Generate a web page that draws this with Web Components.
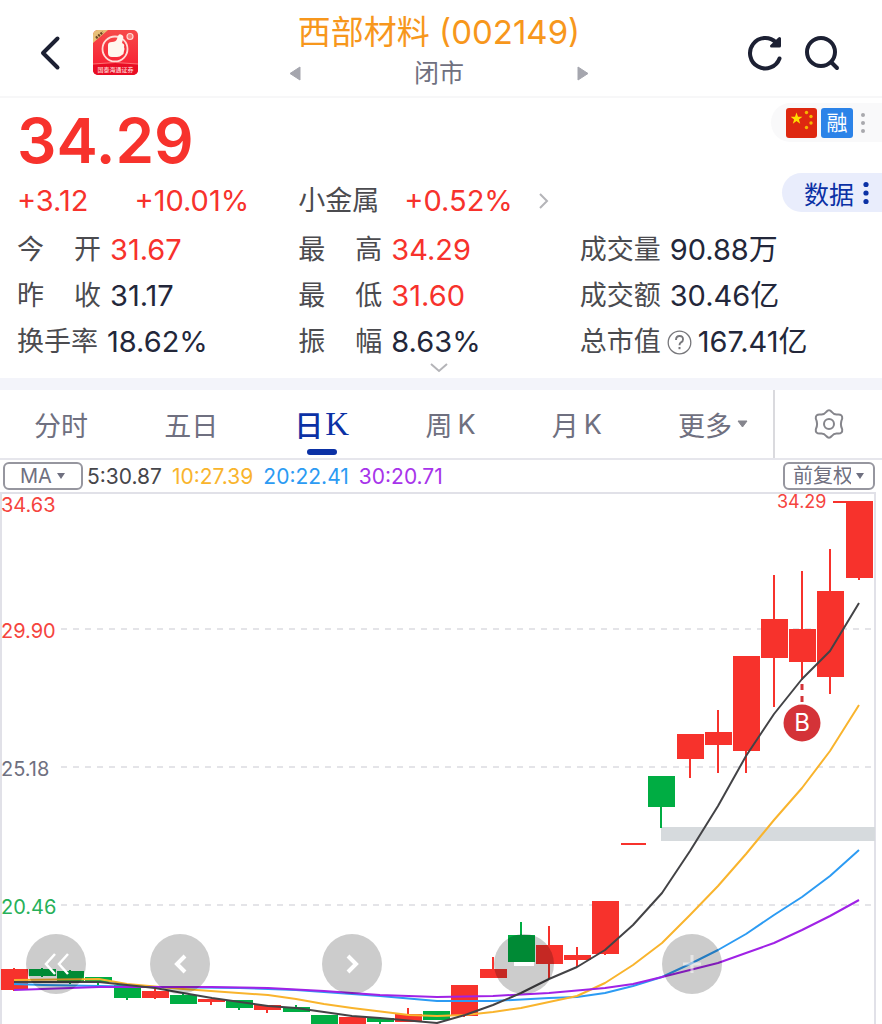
<!DOCTYPE html>
<html lang="zh-CN">
<head>
<meta charset="UTF-8">
<meta name="viewport" content="width=device-width, initial-scale=1">
<title>西部材料 (002149)</title>
<style>
    html {
        background: #fff;
        overflow-x: hidden;
    }

    body {
        margin: 0;
        font-family: Inter, 'Noto Sans CJK SC', sans-serif;
        color: #23273a;
        --up: #f7322c;
        --down: #00ad43;
        --muted: #6f7080;
        --brand: #0b31a5;
        --line: #e6e6ec;
    }
</style>
</head>
<body>
<stock-page></stock-page>

<script>
/**
 * Title bar: back, broker logo, stock name and tools
 */
class StockHeader extends HTMLElement {
    constructor() {
        super();
        this.attachShadow({ mode: 'open' });
    }

    connectedCallback() {
        this.shadowRoot.innerHTML = `
            <style>
                :host {
                    display: grid;
                    grid-template-columns: 1fr auto 1fr;
                    align-items: center;
                    height: 98px;
                    padding: 0 42px 0 38px;
                    border-bottom: 2px solid #f7f7f8;
                    box-sizing: border-box;
                }

                button {
                    display: block;
                    border: 0;
                    padding: 0;
                    background: none;
                    color: inherit;
                }

                svg { display: block; }

                .left, .right {
                    display: flex;
                    align-items: center;
                    padding-top: 9px;
                }

                .left { gap: 31px; }

                .right {
                    justify-content: flex-end;
                    gap: 20px;
                    color: #1c2033;
                }

                h1 {
                    margin: 0;
                    font-size: 33px;
                    line-height: 42px;
                    font-weight: 400;
                    color: #f7971c;
                    white-space: nowrap;
                }

                .status {
                    display: flex;
                    align-items: center;
                    justify-content: space-between;
                    width: 300px;
                    margin: 0 auto;
                    font-size: 25px;
                    line-height: 40px;
                    color: var(--muted);
                }

                .middle {
                    padding-top: 8px;
                    text-align: center;
                }
            </style>
            <div class="left">
                <button aria-label="返回">
                    <svg width="24" height="36" viewBox="0 0 24 36" fill="none" stroke="#1c2033" stroke-width="4" stroke-linecap="round" stroke-linejoin="round"><path d="M19.500 3.500 5 18l14.500 14.500"/></svg>
                </button>
                <svg width="45" height="45" viewBox="0 0 45 45" role="img" aria-label="国泰海通证券">
                    <defs>
                        <linearGradient id="bg" x1="0" y1="0" x2="0" y2="1"><stop offset="0" stop-color="#f64a49"/><stop offset="1" stop-color="#f8172f"/></linearGradient>
                        <clipPath id="box"><rect width="45" height="45" rx="5"/></clipPath>
                    </defs>
                    <g clip-path="url(#box)">
                        <rect width="45" height="45" fill="url(#bg)"/>
                        <path d="M0 0h15L0 13z" fill="#e8c078"/>
                        <path d="M3 8l7-6" stroke="#6d4524" stroke-width="2.500" stroke-dasharray="2 1"/>
                        <circle cx="22" cy="19" r="12.500" fill="none" stroke="#ffdcd6" stroke-width="1.800"/>
                        <path d="M15 15q0-3 4-3 4 0 5-3l1-3q1-3 4-1 2 1 1 4l-1 4q3 1 2 4 1 2 0 4 0 3-2 4-2 2-5 2h-5q-4 0-4-4z" fill="#fff6ee"/>
                        <circle cx="37" cy="6.500" r="3" fill="#fb8079" stroke="#ffd8d2" stroke-width="1.200"/>
                        <path d="M0 34q22-3 45 0v11H0z" fill="#e80d24"/>
                        <path d="M0 34q22-3 45 0" fill="none" stroke="#ff7475"/>
                        <text x="22.500" y="42" text-anchor="middle" font-size="6" font-weight="500" fill="#ffd4d2">国泰海通证券</text>
                    </g>
                </svg>
            </div>
            <div class="middle">
                <h1>西部材料 (002149)</h1>
                <div class="status">
                    <button aria-label="上一只"><svg width="12" height="15" viewBox="0 0 12 15"><path d="M1 7.500 11 1v13z" fill="#a5a6ae" stroke="#a5a6ae" stroke-linejoin="round"/></svg></button>
                    <span>闭市</span>
                    <button aria-label="下一只"><svg width="12" height="15" viewBox="0 0 12 15"><path d="M11 7.500 1 1v13z" fill="#a5a6ae" stroke="#a5a6ae" stroke-linejoin="round"/></svg></button>
                </div>
            </div>
            <div class="right">
                <button aria-label="刷新">
                    <svg width="38" height="38" viewBox="0 0 38 38" fill="none" stroke="currentColor" stroke-width="4" stroke-linecap="round" stroke-linejoin="round"><path d="M33.500 24.500A15.200 15.200 0 1 1 30 8.500"/><path d="M33.500 4.500v7.500h-8z" fill="currentColor" stroke-width="3"/></svg>
                </button>
                <button aria-label="搜索">
                    <svg width="36" height="38" viewBox="0 0 36 38" fill="none" stroke="currentColor" stroke-width="4" stroke-linecap="round"><circle cx="17" cy="18" r="14"/><path d="m27.500 28.500 5.500 5.500"/></svg>
                </button>
            </div>
        `;
    }
}

/**
 * One label/value pair of the quote grid
 */
class QuoteMetric extends HTMLElement {
    constructor() {
        super();
        this.attachShadow({ mode: 'open' });
    }

    connectedCallback() {
        this.shadowRoot.innerHTML = `
            <style>
                :host {
                    display: flex;
                    align-items: center;
                    font-size: 27px;
                    line-height: 46px;
                    white-space: nowrap;
                }

                .label {
                    width: 84px;
                    margin-right: 9px;
                    color: #4b4b4f;
                    text-align-last: justify;
                }

                :host([wide]) .label {
                    width: auto;
                    text-align-last: auto;
                }

                :host([help]) .label { margin-right: 6px; }

                .value { font-size: 29px; }

                :host([up]) .value { color: var(--up); }

                ::slotted(svg) {
                    display: block;
                    margin-right: 6px;
                }
            </style>
            <span class="label">${this.getAttribute('label')}</span>
            <slot name="help"></slot>
            <span class="value"><slot></slot></span>
        `;
    }
}

/**
 * Price, change, sector and the metric grid
 */
class QuoteSummary extends HTMLElement {
    constructor() {
        super();
        this.attachShadow({ mode: 'open' });
    }

    connectedCallback() {
        this.shadowRoot.innerHTML = `
            <style>
                :host {
                    display: block;
                    padding: 5px 21px 0 17px;
                    border-bottom: 12px solid #f3f4fa;
                }

                .top, .metrics {
                    display: grid;
                    grid-template-columns: 1fr 1fr 1fr;
                }

                .metrics { padding-top: 4px; }

                .main { grid-column: span 2; }

                .price {
                    font-size: 62px;
                    line-height: 76px;
                    font-weight: 600;
                    color: var(--up);
                }

                .change {
                    display: grid;
                    grid-template-columns: 1fr 1fr;
                    font-size: 29px;
                    line-height: 44px;
                    color: var(--up);
                    white-space: nowrap;
                }

                .change > * {
                    display: flex;
                    align-items: center;
                }

                .own { gap: 46px; }

                .sector {
                    gap: 25px;
                    color: inherit;
                    text-decoration: none;
                }

                .sector .name {
                    font-size: 27px;
                    color: #4b4b4f;
                }

                .side {
                    display: flex;
                    flex-direction: column;
                    align-items: flex-end;
                    gap: 31px;
                    margin-right: -21px;
                }

                .side button {
                    display: flex;
                    align-items: center;
                    height: 39px;
                    border: 0;
                    border-radius: 20px 0 0 20px;
                    font-family: inherit;
                }

                .badges {
                    gap: 4px;
                    padding: 0 13px 0 15px;
                    background: #f9f9fa;
                }

                .rong {
                    width: 32px;
                    border-radius: 3px;
                    background: #2c83e8;
                    color: #fff;
                    font-size: 21px;
                    line-height: 30px;
                    text-align: center;
                }

                .data {
                    gap: 9px;
                    padding: 0 13px 0 22px;
                    background: #e9edfc;
                    color: var(--brand);
                    font-size: 25px;
                }

                svg { display: block; }

                .expand {
                    display: block;
                    margin: -2px auto 0;
                    padding: 0 0 5px;
                    border: 0;
                    background: none;
                }
            </style>
            <div class="top">
                <div class="main">
                    <div class="price">34.29</div>
                    <div class="change">
                        <div class="own"><span>+3.12</span><span>+10.01%</span></div>
                        <a class="sector" href="#sector"><span class="name">小金属</span><span>+0.52%</span><svg width="11" height="16" viewBox="0 0 11 16" fill="none" stroke="#b4b4b8" stroke-width="2"><path d="m2 1 7 7-7 7"/></svg></a>
                    </div>
                </div>
                <div class="side">
                    <button class="badges" aria-label="标签">
                        <svg width="31" height="30" viewBox="0 0 31 30">
                            <rect width="31" height="30" rx="3" fill="#de2810"/>
                            <path d="m10.500 4.500 1.500 4.200h4.400l-3.500 2.700 1.300 4.300-3.700-2.600-3.700 2.600 1.300-4.300-3.500-2.700H9z" fill="#ffde00"/>
                            <g fill="#f5b800"><circle cx="20.500" cy="4.500" r="1.700"/><circle cx="25" cy="8.500" r="1.700"/><circle cx="25" cy="15" r="1.700"/><circle cx="20.500" cy="19.500" r="1.700"/></g>
                        </svg>
                        <span class="rong">融</span>
                        <svg width="12" height="24" viewBox="0 0 12 24" fill="#a9a9ad"><circle cx="6" cy="4" r="2"/><circle cx="6" cy="12" r="2"/><circle cx="6" cy="20" r="2"/></svg>
                    </button>
                    <button class="data"><span>数据</span><svg width="6" height="24" viewBox="0 0 6 24" fill="#0b31a5"><circle cx="3" cy="3.500" r="2.600"/><circle cx="3" cy="12" r="2.600"/><circle cx="3" cy="20.500" r="2.600"/></svg></button>
                </div>
            </div>
            <div class="metrics">
                <quote-metric label="今 开" up>31.67</quote-metric>
                <quote-metric label="最 高" up>34.29</quote-metric>
                <quote-metric label="成交量" wide>90.88万</quote-metric>
                <quote-metric label="昨 收">31.17</quote-metric>
                <quote-metric label="最 低" up>31.60</quote-metric>
                <quote-metric label="成交额" wide>30.46亿</quote-metric>
                <quote-metric label="换手率" wide>18.62%</quote-metric>
                <quote-metric label="振 幅">8.63%</quote-metric>
                <quote-metric label="总市值" wide help>
                    <svg slot="help" width="25" height="25" viewBox="0 0 25 25" fill="none" stroke="#77777b"><circle cx="12.500" cy="12.500" r="11.300" stroke-width="1.300"/><path d="M9 10q0-4 3.600-4T16 9.500q0 1.800-2 2.900-1.500.8-1.500 2.800" stroke-width="1.900"/><path d="M12.500 17v2.200" stroke-width="2"/></svg>167.41亿</quote-metric>
            </div>
            <button class="expand" aria-label="展开"><svg width="18" height="10" viewBox="0 0 18 10" fill="none" stroke="#b4b4b8" stroke-width="2"><path d="m1 1 8 7 8-7"/></svg></button>
        `;
    }
}

/**
 * K-line period tabs with the settings button
 */
class PeriodTabs extends HTMLElement {
    constructor() {
        super();
        this.attachShadow({ mode: 'open' });
    }

    connectedCallback() {
        this.shadowRoot.innerHTML = `
            <style>
                :host {
                    display: flex;
                    height: 68px;
                    border-bottom: 2px solid var(--line);
                }

                nav {
                    flex: 1;
                    display: flex;
                    justify-content: space-between;
                    padding: 0 25px 0 34px;
                    border-right: 2px solid #dadade;
                }

                button {
                    position: relative;
                    display: flex;
                    align-items: center;
                    gap: 5px;
                    padding: 0;
                    border: 0;
                    background: none;
                    font: inherit;
                    font-size: 27px;
                    color: var(--muted);
                    white-space: nowrap;
                }

                .active {
                    gap: 2px;
                    color: var(--brand);
                    font-size: 29px;
                    font-weight: 500;
                }

                .active .k {
                    font-family: 'Liberation Serif', serif;
                    font-size: 33px;
                }

                .active::after {
                    content: '';
                    position: absolute;
                    left: 50%;
                    bottom: 3px;
                    width: 30px;
                    height: 6px;
                    margin-left: -15px;
                    border-radius: 3px;
                    background: var(--brand);
                }

                .settings {
                    width: 107px;
                    justify-content: center;
                }
            </style>
            <nav aria-label="周期">
                <button>分时</button>
                <button>五日</button>
                <button class="active"><span>日</span><span class="k">K</span></button>
                <button><span>周</span><span>K</span></button>
                <button><span>月</span><span>K</span></button>
                <button><span>更多</span><svg width="11" height="8" viewBox="0 0 11 8"><path d="M1 1h9L5.500 7z" fill="#85858d" stroke="#85858d" stroke-linejoin="round"/></svg></button>
            </nav>
            <button class="settings" aria-label="设置">
                <svg width="32" height="32" viewBox="0 0 32 32" fill="none" stroke="#85858b" stroke-width="2" stroke-linejoin="round"><path d="M13.200 4q2.800-3.400 5.600 0 2.400 3.200 6.200 2.400 4.700-.2 4.200 4.200-2.600 5.400 0 10.800.5 4.400-4.200 4.200-3.800-.8-6.200 2.400-2.800 3.400-5.600 0-2.400-3.200-6.200-2.400-4.700.2-4.200-4.200 2.600-5.400 0-10.800Q2.300 6.200 7 6.400 10.800 7.200 13.200 4z"/><circle cx="16" cy="16" r="5"/></svg>
            </button>
        `;
    }
}

/**
 * Small bordered drop-down
 */
class DropPicker extends HTMLElement {
    constructor() {
        super();
        this.attachShadow({ mode: 'open' });
    }

    connectedCallback() {
        const options = this.getAttribute('options').split(',');

        this.shadowRoot.innerHTML = `
            <style>
                :host {
                    display: block;
                    position: relative;
                }

                select {
                    display: block;
                    appearance: none;
                    width: 100%;
                    height: 28px;
                    padding: 0 22px 0 8px;
                    border: 2px solid #96969f;
                    border-radius: 6px;
                    background: #fff;
                    color: var(--muted);
                    font: inherit;
                    font-size: 20px;
                    line-height: 24px;
                }

                :host([latin]) select { padding-left: 15px; }

                svg {
                    position: absolute;
                    right: 11px;
                    top: 11px;
                    pointer-events: none;
                }

                :host([latin]) svg { right: 18px; }
            </style>
            <select aria-label="${this.getAttribute('label')}">
                ${options.map(o => `<option>${o}</option>`).join('')}
            </select>
            <svg width="8" height="6" viewBox="0 0 8 6"><path d="M0 0h8L4 6z" fill="#6f7080"/></svg>
        `;
    }
}

/**
 * Moving average readout above the chart
 */
class AverageBar extends HTMLElement {
    constructor() {
        super();
        this.attachShadow({ mode: 'open' });
    }

    connectedCallback() {
        this.shadowRoot.innerHTML = `
            <style>
                :host {
                    display: flex;
                    align-items: center;
                    gap: 10px;
                    height: 32px;
                    padding: 0 7px 0 3px;
                    font-size: 21px;
                }

                .ma {
                    width: 80px;
                    margin-right: -6px;
                }

                .adjust {
                    width: 92px;
                    margin-left: auto;
                }
            </style>
            <drop-picker class="ma" label="指标" options="MA,BOLL" latin></drop-picker>
            <span style="color: #46464a">5:30.87</span>
            <span style="color: #f9b42d">10:27.39</span>
            <span style="color: #2c9bf3">20:22.41</span>
            <span style="color: #a734ea">30:20.71</span>
            <drop-picker class="adjust" label="复权" options="前复权,后复权,不复权"></drop-picker>
        `;
    }
}

/**
 * Candlestick chart with averages and the pan/zoom buttons
 */
class KlineChart extends HTMLElement {
    constructor() {
        super();
        this.attachShadow({ mode: 'open' });
        this.step = 28.15;
        // [top, bottom, wick top, wick bottom, colour], oldest first
        this.candles = [
            [477, 498, 476, 499, 'u'], [477, 484, 476, 485, 'd'], [479, 491, 478, 492, 'd'],
            [485, 490, 485, 493, 'd'], [493, 506, 493, 508, 'd'], [499, 506, 497, 507, 'u'],
            [503, 512, 502, 512, 'd'], [507, 510, 507, 513, 'u'], [508, 516, 508, 518, 'd'],
            [513, 518, 513, 521, 'u'], [515, 520, 513, 520, 'd'], [523, 536, 523, 540, 'd'],
            [525, 536, 525, 540, 'u'], [526, 530, 525, 532, 'd'], [522, 530, 516, 530, 'u'],
            [519, 528, 519, 528, 'd'], [493, 524, 493, 525, 'u'], [477, 486, 465, 486, 'u'],
            [443, 470, 430, 474, 'd'], [453, 472, 434, 487, 'u'], [463, 468, 455, 475, 'u'],
            [409, 462, 409, 463, 'u'], [351, 353, 351, 353, 'u'], [284, 315, 284, 336, 'd'],
            [242, 267, 242, 286, 'u'], [240, 253, 218, 281, 'u'], [164, 259, 164, 281, 'u'],
            [127, 166, 83, 215, 'u'], [137, 170, 79, 188, 'u'], [99, 185, 57, 202, 'u'],
            [9, 86, 9, 88, 'u']
        ];
        this.averages = {
            '#2c9bf3': '14,492 43,493 99,494 155,495 240,496 296,498 324,500 380,504 437,509 493,509 549,506 577,505 605,501 633,494 662,485 690,472 718,458 746,442 774,423 802,405 830,384 859,358',
            '#f9b42d': '14,488 99,487 127,492 183,497 268,503 296,507 324,512 352,516 409,523 437,524 465,523 493,520 521,516 549,510 577,504 605,491 633,473 662,451 690,423 718,394 746,362 774,328 802,296 830,259 859,213',
            '#a022e6': '14,498 99,495 211,495 268,496 324,499 380,503 437,505 493,504 549,501 605,496 633,492 662,485 718,471 746,461 774,451 802,438 830,424 859,408',
            '#434346': '14,490 99,490 127,493 155,496 183,501 212,506 240,510 268,514 296,516 324,520 352,524 380,526 437,531 465,523 493,513 521,501 549,487 577,475 605,458 633,433 662,401 690,359 718,314 746,264 774,222 802,187 830,159 859,111'
        };
    }

    connectedCallback() {
        this.render();
    }

    drawCandle([top, bottom, high, low, kind], i) {
        const x = Math.round(14 + i * this.step);
        const color = kind === 'u' ? '#f7322c' : '#00ad43';
        const half = bottom - top < 3 ? 12 : 13;
        return `
            <rect x="${x - 1}" y="${high}" width="2" height="${low - high}" fill="${color}"/>
            <rect x="${x - half}" y="${top}" width="${half * 2 + 1}" height="${bottom - top}" fill="${color}"/>`;
    }

    render() {
        const levels = [[137, '29.90', '#f5443e'], [275, '25.18', '#6f7080'], [413, '20.46', '#27b059']];
        const lines = Object.entries(this.averages);

        this.shadowRoot.innerHTML = `
            <style>
                :host {
                    display: block;
                    position: relative;
                }

                .plot {
                    display: block;
                    width: 100%;
                    height: auto;
                }

                text { font-size: 20px; }

                /* controls float over the plot */
                button {
                    position: absolute;
                    top: 83%;
                    width: 60px;
                    height: 60px;
                    padding: 0;
                    border: 0;
                    border-radius: 50%;
                    background: rgba(0, 0, 0, 0.2);
                }

                button svg {
                    display: block;
                    margin: 0 auto;
                }
            </style>
            <svg class="plot" viewBox="0 0 882 532" role="img" aria-label="日K线">
                <path d="M1 532V1h874v531" fill="none" stroke="#e1e1e8" stroke-width="2"/>
                <g stroke="#dcdce1" stroke-width="1.400" stroke-dasharray="6 6">
                    ${levels.map(([y]) => `<path d="M61 ${y}H875"/>`).join('')}
                </g>
                <rect x="661" y="335" width="214" height="14" fill="#d6dadd"/>
                ${this.candles.map((c, i) => this.drawCandle(c, i)).join('')}
                ${lines.map(([color, points]) => `<polyline points="${points}" fill="none" stroke="${color}" stroke-width="2" stroke-linejoin="round"/>`).join('')}
                <text x="1" y="20" fill="#f5443e">34.63</text>
                ${levels.map(([y, label, color]) => `<text x="1" y="${y + 9}" fill="${color}">${label}</text>`).join('')}
                <text x="777" y="16" fill="#f5443e" style="font-size: 18px">34.29</text>
                <path d="M833 10h13" stroke="#f7322c" stroke-width="2"/>
                <path d="M802 192v18" stroke="#d43338" stroke-width="3" stroke-dasharray="6 6"/>
                <circle cx="802" cy="231" r="18.500" fill="#d43338"/>
                <text x="802" y="239" text-anchor="middle" fill="#fff" style="font-size: 24px">B</text>
            </svg>
            <button style="left: 3%" aria-label="最早"><svg width="28" height="24" viewBox="0 0 28 24" fill="none" stroke="#fff" stroke-width="2.500"><path d="m13 2-9 10 9 10M26 2l-9 10 9 10"/></svg></button>
            <button style="left: 17%" aria-label="向左"><svg width="24" height="24" viewBox="0 0 24 24" fill="none" stroke="#fff" stroke-width="4"><path d="m17 4-8 8 8 8"/></svg></button>
            <button style="left: 36.5%" aria-label="向右"><svg width="24" height="24" viewBox="0 0 24 24" fill="none" stroke="#fff" stroke-width="4"><path d="m8 4 8 8-8 8"/></svg></button>
            <button style="left: 56%" aria-label="缩小"><svg width="22" height="24" viewBox="0 0 22 24" fill="none" stroke="#fff" stroke-width="4"><path d="M1 12h20"/></svg></button>
            <button style="left: 75%" aria-label="放大"><svg width="22" height="24" viewBox="0 0 22 24" fill="none" stroke="#fff" stroke-opacity=".5" stroke-width="3"><path d="M2 12h18M11 3v18"/></svg></button>
        `;
    }
}

class StockPage extends HTMLElement {
    constructor() {
        super();
        this.attachShadow({ mode: 'open' });
    }

    connectedCallback() {
        this.shadowRoot.innerHTML = `
            <style>
                :host {
                    display: block;
                    overflow: hidden;
                }
            </style>
            <stock-header></stock-header>
            <quote-summary></quote-summary>
            <period-tabs></period-tabs>
            <average-bar></average-bar>
            <kline-chart></kline-chart>
        `;
    }
}

customElements.define('stock-header', StockHeader);
customElements.define('quote-metric', QuoteMetric);
customElements.define('quote-summary', QuoteSummary);
customElements.define('period-tabs', PeriodTabs);
customElements.define('drop-picker', DropPicker);
customElements.define('average-bar', AverageBar);
customElements.define('kline-chart', KlineChart);
customElements.define('stock-page', StockPage);
</script>
</body>
</html>
